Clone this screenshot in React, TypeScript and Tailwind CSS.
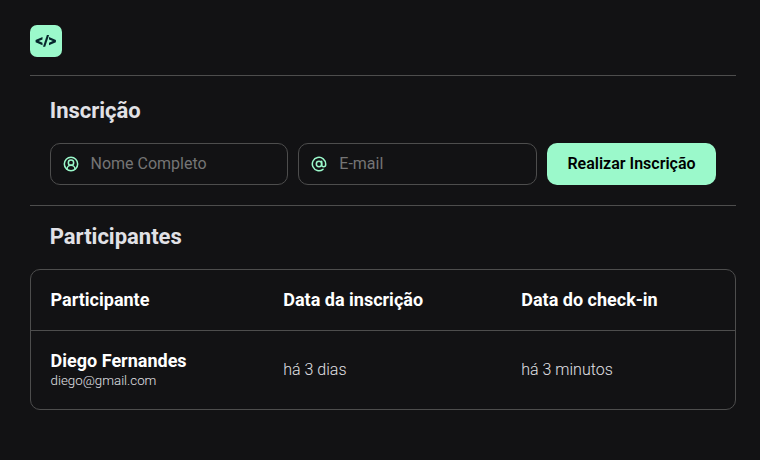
import { AtSign, CircleUserRound } from "lucide-react";

export default function App() {
  const field = "flex h-[42px] items-center gap-3 rounded-[10px] border border-[#4d4d4d] px-3";
  const input = "w-full min-w-0 bg-transparent text-base leading-5 text-white outline-none placeholder:text-[#757575]";
  return (
    <div className="h-[460px] bg-[#121214] pt-[25px] pr-6 pl-[30px] font-['Roboto',sans-serif] text-[#e1e1e6]">
      <header className="h-[51px] border-b border-[#4d4d4d]">
        <div className="flex size-8 items-center justify-center rounded-[7px] bg-[#9bf9cb]">
          <svg width="22" height="14" viewBox="0 0 22 14" fill="#06262c">
            <path d="M7.500 2.900v2.600L3.700 7.100l3.800 1.600v2.600L0.600 8.200V6z" />
            <path d="M14 2.900v2.600l3.800 1.600L14 8.700v2.600l6.900-3.100V6z" />
            <path d="M11.900 1h2.200L10.200 12.800H8z" />
          </svg>
        </div>
      </header>
      <section className="h-[130px] border-b border-[#4d4d4d] px-5 pt-[21px]">
        <h2 className="-ml-[0.3px] text-[22px] leading-[28px] font-bold">Inscrição</h2>
        <form className="mt-[18px] grid grid-cols-[238px_239px_169px] gap-[10px]">
          <label className={field}>
            <CircleUserRound strokeWidth={2.3} className="size-4 shrink-0 text-[#9bf9cb]" />
            <input className={`${input} -ml-[0.5px]`} placeholder="Nome Completo" />
          </label>
          <label className={field}>
            <AtSign strokeWidth={2.3} className="size-4 shrink-0 text-[#9bf9cb]" />
            <input className={`${input} ml-[0.3px]`} placeholder="E-mail" />
          </label>
          <button type="button" className="h-[42px] rounded-[10px] bg-[#9bf9cb] text-base font-semibold text-black">Realizar Inscrição</button>
        </form>
      </section>
      <section>
        <h2 className="-ml-[0.3px] px-5 pt-[17px] text-[22px] leading-[28px] font-bold">Participantes</h2>
        <div className="mt-[18px] h-[141px] rounded-[10px] border border-[#4d4d4d]">
          <div className="grid h-[61px] grid-cols-[232.7px_238px_1fr] items-center border-b border-[#4d4d4d] px-[19.6px] text-lg font-bold text-white">
            <span>Participante</span><span>Data da inscrição</span><span>Data do check-in</span>
          </div>
          <div className="grid h-[78px] grid-cols-[232.7px_238px_1fr] items-center px-[19.6px] text-base font-light">
            <div>
              <p className="text-lg leading-[20px] font-bold text-white">Diego Fernandes</p>
              <p className="text-[13.3px] leading-[19px]">diego@gmail.com</p>
            </div>
            <span>há 3 dias</span><span>há 3 minutos</span>
          </div>
        </div>
      </section>
    </div>
  );
}
